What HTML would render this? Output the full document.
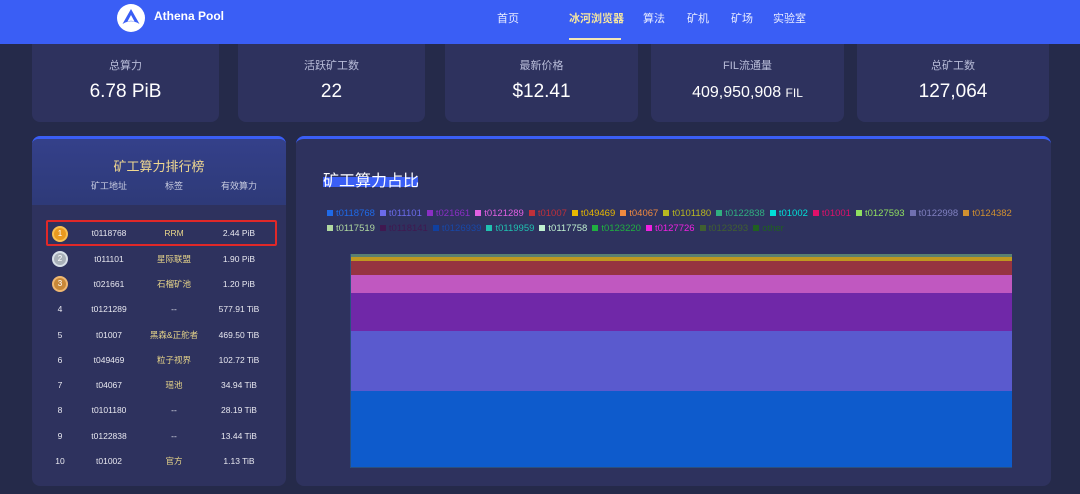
<!DOCTYPE html>
<html><head><meta charset="utf-8"><style>
*{margin:0;padding:0;box-sizing:border-box}
body{width:1080px;height:494px;background:#252a4a;font-family:"Liberation Sans","Noto Sans CJK SC",sans-serif;position:relative;overflow:hidden;color:#fff}
.hdr{position:absolute;left:0;top:0;width:1080px;height:44px;background:#3a5ef5}
.logo{position:absolute;left:117px;top:4px;width:28px;height:28px;border-radius:50%;background:#fff}
.brand{position:absolute;left:154px;top:9px;font-size:12px;font-weight:bold;color:#fff}
.nav{position:absolute;top:10px;font-size:11px;color:#e8ecff}
.card{position:absolute;top:44px;height:78px;background:#2e325e;border-radius:0 0 8px 8px;text-align:center}
.card .l{font-size:11px;color:#b8bcd8;margin-top:13px}
.card .v{font-size:19px;color:#fff;margin-top:8px}
.panel{position:absolute;top:136px;height:350px;background:#2e325e;border-radius:8px;border-top:3px solid #3a5ef5}
.row{position:absolute;left:0;width:254px;font-size:8.5px;color:#e8e8f0;height:14px;line-height:14px}
.row span{position:absolute;text-align:center;transform:translateX(-50%);white-space:nowrap}
.tag{color:#e8d68a}
.lg{position:absolute;font-size:9.5px;white-space:nowrap}
.lg i{display:inline-block;width:6px;height:6px;margin:0 3px 0 0;vertical-align:0px}
.lg b{font-weight:normal;margin-right:5px}
</style></head><body>
<div class="hdr">
<div class="logo"><svg width="28" height="28" viewBox="0 0 28 28"><path d="M14 5 L5.5 20 Q14 14.5 22.5 20 Z" fill="#3a5ef5"/><path d="M14 11 L10.5 17.5 Q14 16 17.5 17.5Z" fill="#fff"/></svg></div>
<div class="brand">Athena Pool</div>
<div class="nav" style="left:497px">首页</div>
<div class="nav" style="left:569px;color:#f5e6a0;font-weight:bold">冰河浏览器</div>
<div style="position:absolute;left:569px;top:38px;width:52px;height:2px;background:#f2e6b8"></div>
<div class="nav" style="left:643px">算法</div>
<div class="nav" style="left:687px">矿机</div>
<div class="nav" style="left:731px">矿场</div>
<div class="nav" style="left:773px">实验室</div>
</div>
<div class="card" style="left:32px;width:187px"><div class="l">总算力</div><div class="v">6.78 PiB</div></div>
<div class="card" style="left:238px;width:187px"><div class="l">活跃矿工数</div><div class="v">22</div></div>
<div class="card" style="left:445px;width:193px"><div class="l">最新价格</div><div class="v">$12.41</div></div>
<div class="card" style="left:651px;width:193px"><div class="l">FIL流通量</div><div class="v" style="font-size:16px;margin-top:11px">409,950,908 <span style="font-size:12px">FIL</span></div></div>
<div class="card" style="left:857px;width:192px"><div class="l">总矿工数</div><div class="v">127,064</div></div>

<div class="panel" style="left:32px;width:254px">
<div style="position:absolute;left:0;top:0;width:254px;height:66px;background:linear-gradient(#34408a,#2e3a78);border-radius:6px 6px 0 0"></div>
<div style="position:absolute;left:0;top:17px;width:254px;text-align:center;font-size:13px;color:#f0d890">矿工算力排行榜</div>
<div class="row" style="top:40px;color:#c8cce0;font-size:9px"><span style="left:77px">矿工地址</span><span style="left:142px">标签</span><span style="left:207px">有效算力</span></div>
<div style="position:absolute;left:14px;top:81px;width:231px;height:26px;border:2px solid #e02828;border-radius:2px"></div>
</div>
<div style="position:absolute;left:52px;top:226px;width:16px;height:16px;border-radius:50%;background:#e89a20;border:2px solid #f8c050;color:#fff;font-size:8px;text-align:center;line-height:12px">1</div>
<div style="position:absolute;left:52px;top:251px;width:16px;height:16px;border-radius:50%;background:#a8b0b8;border:2px solid #d8e0e8;color:#fff;font-size:8px;text-align:center;line-height:12px">2</div>
<div style="position:absolute;left:52px;top:276px;width:16px;height:16px;border-radius:50%;background:#c88838;border:2px solid #f0b870;color:#fff;font-size:8px;text-align:center;line-height:12px">3</div>
<div style="position:absolute;left:32px;top:0">
<div class="row" style="top:226px"><span style="left:77px">t0118768</span><span style="left:142px" class="tag">RRM</span><span style="left:207px">2.44 PiB</span></div>
<div class="row" style="top:252px"><span style="left:77px">t011101</span><span style="left:142px" class="tag">星际联盟</span><span style="left:207px">1.90 PiB</span></div>
<div class="row" style="top:277px"><span style="left:77px">t021661</span><span style="left:142px" class="tag">石榴矿池</span><span style="left:207px">1.20 PiB</span></div>
<div class="row" style="top:302px"><span style="left:28px">4</span><span style="left:77px">t0121289</span><span style="left:142px">--</span><span style="left:207px">577.91 TiB</span></div>
<div class="row" style="top:328px"><span style="left:28px">5</span><span style="left:77px">t01007</span><span style="left:142px" class="tag">黑森&amp;正舵者</span><span style="left:207px">469.50 TiB</span></div>
<div class="row" style="top:353px"><span style="left:28px">6</span><span style="left:77px">t049469</span><span style="left:142px" class="tag">粒子视界</span><span style="left:207px">102.72 TiB</span></div>
<div class="row" style="top:378px"><span style="left:28px">7</span><span style="left:77px">t04067</span><span style="left:142px" class="tag">瑶池</span><span style="left:207px">34.94 TiB</span></div>
<div class="row" style="top:403px"><span style="left:28px">8</span><span style="left:77px">t0101180</span><span style="left:142px">--</span><span style="left:207px">28.19 TiB</span></div>
<div class="row" style="top:429px"><span style="left:28px">9</span><span style="left:77px">t0122838</span><span style="left:142px">--</span><span style="left:207px">13.44 TiB</span></div>
<div class="row" style="top:454px"><span style="left:28px">10</span><span style="left:77px">t01002</span><span style="left:142px" class="tag">官方</span><span style="left:207px">1.13 TiB</span></div>
</div>

<div class="panel" style="left:296px;width:755px"></div>
<div style="position:absolute;left:323px;top:177px;width:95px;height:10px;background:#3a5ef5"></div>
<div style="position:absolute;left:323px;top:167px;font-size:16px;color:#fff">矿工算力占比</div>
<div class="lg" style="left:327px;top:208px">
<i style="background:#1f6ae8"></i><b style="color:#1f6ae8">t0118768</b><i style="background:#6b6bea"></i><b style="color:#6b6bea">t011101</b><i style="background:#8a2fc4"></i><b style="color:#8a2fc4">t021661</b><i style="background:#e060e0"></i><b style="color:#e060e0">t0121289</b><i style="background:#c0303a"></i><b style="color:#c0303a">t01007</b><i style="background:#e8b800"></i><b style="color:#e8b800">t049469</b><i style="background:#f08a40"></i><b style="color:#f08a40">t04067</b><i style="background:#b8b820"></i><b style="color:#b8b820">t0101180</b><i style="background:#30b080"></i><b style="color:#30b080">t0122838</b><i style="background:#00e0d8"></i><b style="color:#00e0d8">t01002</b><i style="background:#e0106a"></i><b style="color:#e0106a">t01001</b><i style="background:#90e060"></i><b style="color:#90e060">t0127593</b><i style="background:#7070b0"></i><b style="color:#8080c0">t0122998</b><i style="background:#d09030"></i><b style="color:#d09030">t0124382</b></div>
<div class="lg" style="left:327px;top:223px">
<i style="background:#b0d8a0"></i><b style="color:#b0d8a0">t0117519</b><i style="background:#401850"></i><b style="color:#401850">t0118141</b><i style="background:#1040a0"></i><b style="color:#1848a8">t0126939</b><i style="background:#20c0b0"></i><b style="color:#20c0b0">t0119959</b><i style="background:#c0f0d0"></i><b style="color:#c0f0d0">t0117758</b><i style="background:#20b040"></i><b style="color:#20b040">t0123220</b><i style="background:#f020e0"></i><b style="color:#f020e0">t0127726</b><i style="background:#406030"></i><b style="color:#406030">t0123293</b><i style="background:#206020"></i><b style="color:#206020">other</b></div>

<div style="position:absolute;left:350px;top:254px;width:662px;height:214px;border-left:1px solid #2a5080;border-bottom:1px solid #2a5080">
<div style="height:3px;background:#5a8070"></div>
<div style="height:4px;background:#c09820"></div>
<div style="height:14px;background:#963440"></div>
<div style="height:18px;background:#c058c0"></div>
<div style="height:38px;background:#7028a8"></div>
<div style="height:60px;background:#5a5ace"></div>
<div style="height:76px;background:#0e5bcc"></div>
</div>
</body></html>
